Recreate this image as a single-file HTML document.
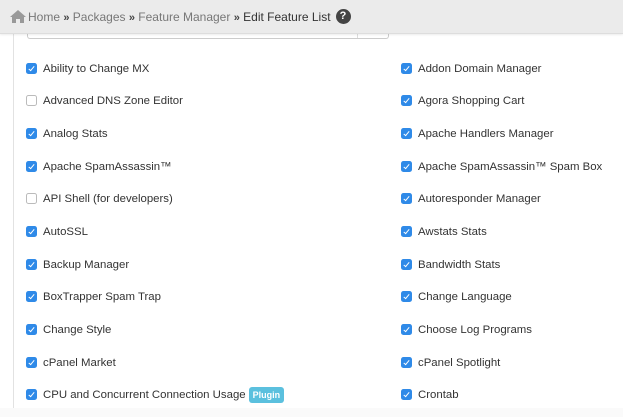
<!DOCTYPE html>
<html><head><style>
body{margin:0;width:623px;height:417px;overflow:hidden;background:#fff;font-family:"Liberation Sans",sans-serif;position:relative;color:#333}
.hdr{position:absolute;left:0;top:0;width:623px;height:33px;background:#ebebeb;border-bottom:1px solid #ddd;box-shadow:0 1px 2px rgba(0,0,0,.08);z-index:2}
.crumb{position:absolute;left:28px;top:10px;font-size:12px;color:#777;white-space:nowrap;line-height:14px}
.crumb b{color:#444;font-weight:bold;font-size:11px}
.crumb .cur{color:#333}
.q{display:inline-block;width:15px;height:15px;border-radius:50%;background:#444;color:#fff;font-size:11px;font-weight:bold;text-align:center;line-height:15px;vertical-align:top;margin-left:5px;margin-top:-1px}
.vl{position:absolute;left:13px;top:33px;width:1px;height:384px;background:#e2e2e2}
.box{position:absolute;left:27px;top:20px;width:360px;height:18px;border:1px solid #ccc;border-top:none;border-radius:0 0 3px 3px}
.box:after{content:"";position:absolute;left:329px;top:0;width:1px;height:18px;background:#ddd}
.row{position:absolute;font-size:11.4px;color:#333;white-space:nowrap;line-height:14px;height:14px}
.cb{position:absolute;width:11px;height:11px;border-radius:2.5px;background:#2f8ae8;top:1px;left:-17px}
.cb:after{content:"";position:absolute;left:3.5px;top:1.5px;width:2px;height:5px;border:solid #fff;border-width:0 1.3px 1.3px 0;transform:rotate(40deg)}
.cb.off{background:#fff;border:1px solid #bbb;width:9px;height:9px}
.cb.off:after{display:none}
.plug{display:inline-block;background:#5bc0de;color:#fff;font-size:9px;font-weight:bold;padding:0 4px;line-height:16px;height:16px;border-radius:3px;vertical-align:top;margin-top:-1px;margin-left:3px}
.foot{position:absolute;left:0;top:408px;width:623px;height:9px;background:#fafafa}
</style></head><body>
<div class="box"></div>
<div class="hdr"><div class="crumb"><svg width="16" height="13" viewBox="0 0 16 13" style="position:absolute;left:-18px;top:0px"><path d="M8 0L0 7h2v6h4V9h4v4h4V7h2z" fill="#999"/></svg>Home <b>»</b> Packages <b>»</b> Feature Manager <b>»</b> <span class="cur">Edit Feature List</span><span class="q">?</span></div></div>
<div class="vl"></div>
<div class="foot"></div>
<div class="row" style="left:43px;top:62px"><i class="cb"></i>Ability to Change MX</div>
<div class="row" style="left:43px;top:94px"><i class="cb off"></i>Advanced DNS Zone Editor</div>
<div class="row" style="left:43px;top:127px"><i class="cb"></i>Analog Stats</div>
<div class="row" style="left:43px;top:160px"><i class="cb"></i>Apache SpamAssassin™</div>
<div class="row" style="left:43px;top:192px"><i class="cb off"></i>API Shell (for developers)</div>
<div class="row" style="left:43px;top:225px"><i class="cb"></i>AutoSSL</div>
<div class="row" style="left:43px;top:258px"><i class="cb"></i>Backup Manager</div>
<div class="row" style="left:43px;top:290px"><i class="cb"></i>BoxTrapper Spam Trap</div>
<div class="row" style="left:43px;top:323px"><i class="cb"></i>Change Style</div>
<div class="row" style="left:43px;top:356px"><i class="cb"></i>cPanel Market</div>
<div class="row" style="left:43px;top:388px"><i class="cb"></i>CPU and Concurrent Connection Usage<span class="plug">Plugin</span></div>
<div class="row" style="left:418px;top:62px"><i class="cb"></i>Addon Domain Manager</div>
<div class="row" style="left:418px;top:94px"><i class="cb"></i>Agora Shopping Cart</div>
<div class="row" style="left:418px;top:127px"><i class="cb"></i>Apache Handlers Manager</div>
<div class="row" style="left:418px;top:160px"><i class="cb"></i>Apache SpamAssassin™ Spam Box</div>
<div class="row" style="left:418px;top:192px"><i class="cb"></i>Autoresponder Manager</div>
<div class="row" style="left:418px;top:225px"><i class="cb"></i>Awstats Stats</div>
<div class="row" style="left:418px;top:258px"><i class="cb"></i>Bandwidth Stats</div>
<div class="row" style="left:418px;top:290px"><i class="cb"></i>Change Language</div>
<div class="row" style="left:418px;top:323px"><i class="cb"></i>Choose Log Programs</div>
<div class="row" style="left:418px;top:356px"><i class="cb"></i>cPanel Spotlight</div>
<div class="row" style="left:418px;top:388px"><i class="cb"></i>Crontab</div>
</body></html>
